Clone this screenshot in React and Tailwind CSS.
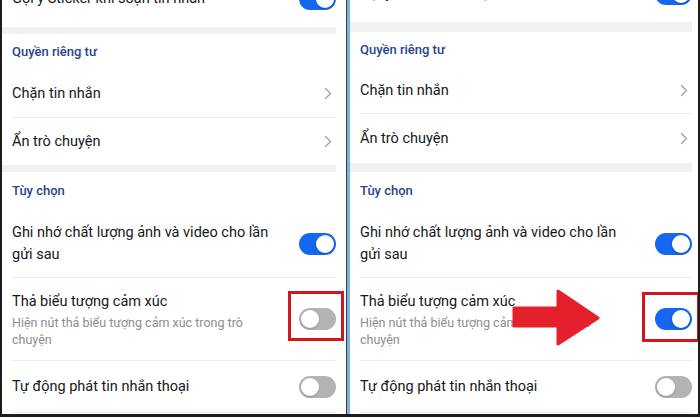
import React from "react";

const font = { fontFamily: "Roboto, 'Noto Sans', sans-serif" };

function Toggle({ on }) {
  return (
    <div
      className={
        "relative w-[37px] h-[22px] rounded-full shrink-0 " +
        (on ? "bg-[#1467ee]" : "bg-[#b3b3b3]")
      }
    >
      <div
        className={
          "absolute top-[2px] w-[18px] h-[18px] rounded-full bg-white shadow-[0_1px_2px_rgba(0,0,0,0.2)] " +
          (on ? "right-[2px]" : "left-[2px]")
        }
      />
    </div>
  );
}

function Chevron() {
  return (
    <svg width="8" height="13" viewBox="0 0 8 13" className="shrink-0 mr-[4px]">
      <path d="M1.5 1.5 L6.5 6.5 L1.5 11.5" fill="none" stroke="#a3a3a6" strokeWidth="1.4" strokeLinecap="round" strokeLinejoin="round" />
    </svg>
  );
}

function Divider() {
  return <div className="h-px bg-[#ebebed] ml-[10px]" />;
}

function Band({ h }) {
  return <div className={"bg-[#f1f1f3] " + h} />;
}

function Header({ children, h }) {
  return (
    <div className={"flex items-center pl-[10px] text-[13px] font-medium text-[#26468c] " + h}>
      {children}
    </div>
  );
}

function Row({ h, children, right }) {
  return (
    <div className={"flex items-center justify-between pl-[10px] " + h}>
      <div className="text-[14.5px] text-[#171717] leading-[22px]">{children}</div>
      {right}
    </div>
  );
}

function Panel({ right }) {
  return (
    <div className={"relative flex flex-col bg-white overflow-hidden " + (right ? "w-[348px] pr-[6px]" : "w-[344px] pr-[10px]")}>
      <div className={"flex items-center justify-between pl-[10px] h-[56px] shrink-0 " + (right ? "-mt-[34px]" : "-mt-[29px]")}>
        <div className="text-[14.5px] text-[#171717]">Gợi ý Sticker khi soạn tin nhắn</div>
        <Toggle on />
      </div>
      {right ? <Band h="h-[10px]" /> : <Band h="h-[7px]" />}
      <Header h="h-[36px]">Quyền riêng tư</Header>
      <Row h={right ? "h-[45px]" : "h-[47px]"} right={<Chevron />}>Chặn tin nhắn</Row>
      <Divider />
      <Row h={right ? "h-[49px]" : "h-[47px]"} right={<Chevron />}>Ẩn trò chuyện</Row>
      <Band h={right ? "h-[9px]" : "h-[7px]"} />
      <Header h="h-[38px]">Tùy chọn</Header>
      <Row h="h-[67px]" right={<Toggle on />}>
        <div>Ghi nhớ chất lượng ảnh và video cho lần</div>
        <div>gửi sau</div>
      </Row>
      <Divider />
      <div className="flex items-center justify-between pl-[10px] h-[82px]">
        <div>
          <div className="text-[14.5px] text-[#171717] leading-[22px]">Thả biểu tượng cảm xúc</div>
          <div className="text-[12.5px] text-[#8d8d92] leading-[17px] mt-[1px]">
            <div>Hiện nút thả biểu tượng cảm xúc trong trò</div>
            <div>chuyện</div>
          </div>
        </div>
        <Toggle on={right} />
      </div>
      <Divider />
      <Row h="h-[51px]" right={<Toggle />}>Tự động phát tin nhắn thoại</Row>
      <Divider />

      {/* highlight box */}
      <div
        className={
          "absolute border-[3px] border-[#d01720] " +
          (right ? "left-[292px] top-[292px] w-[58px] h-[50px]" : "left-[286px] top-[291px] w-[56px] h-[50px]")
        }
      />

      {right && (
        <svg className="absolute left-[162px] top-[288px]" width="90" height="58" viewBox="0 0 90 58">
          <polygon
            points="2,20 46,20 46,3 86,30 46,56 46,38 2,38"
            fill="#e3202b"
            stroke="#e3202b"
            strokeWidth="3"
            strokeLinejoin="round"
          />
        </svg>
      )}
    </div>
  );
}

export default function App() {
  return (
    <div style={font} className="w-[700px] h-[417px] overflow-hidden flex bg-[#1d1d1d] border-l-2 border-r-2 border-b-[3px] border-[#1d1d1d]">
      <Panel />
      <div className="w-[1px] bg-[#3a3a3a]" />
      <div className="w-[3px] bg-[#7fb2e3]" />
      <Panel right />
    </div>
  );
}
